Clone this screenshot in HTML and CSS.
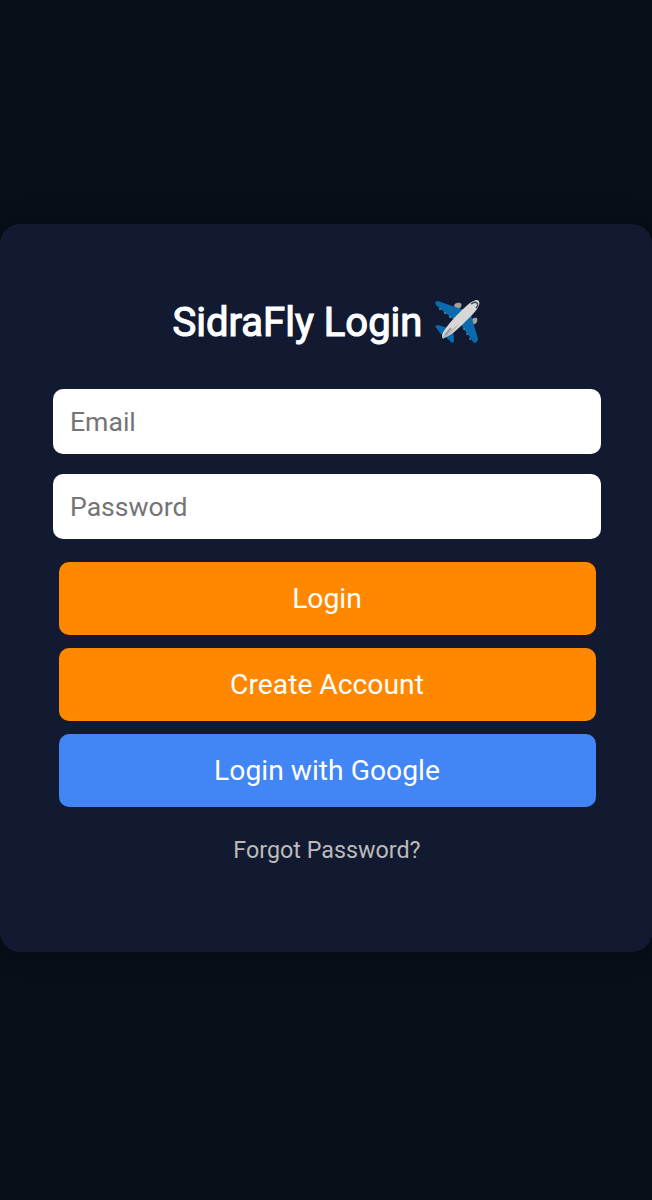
FILE: index.html
```html
<!DOCTYPE html>
<html lang="en">
<head>
    <meta charset="UTF-8">
    <meta name="viewport" content="width=device-width, initial-scale=1.0">
    <title>SidraFly Login</title>
    <link rel="stylesheet" href="styles.css">
</head>
<body>

    <div class="login-box">
        <h2>
            <span>SidraFly Login</span>
            <svg class="plane" viewBox="0 0 48 48" role="img" aria-label="Airplane">
                <!-- engines -->
                <path d="M21 8c0-3 4-4 6-3 2 0 2 3 0 5l-3 2z" fill="#a3a19f"/>
                <path d="M38 23c1-3 4-4 6-3 1 2 0 5-2 6l-3 1z" fill="#a3a19f"/>
                <!-- wings and tail -->
                <path d="M2 4l3-1 26 9-10 10L10 13 3 7z" fill="#0a6aae"/>
                <path d="M28 27l10-10 7 24c0 2-2 4-4 4z" fill="#0a6aae"/>
                <path d="M2 28l3-1 10 3-5 8-3-3z" fill="#0a6aae"/>
                <path d="M12 38l8-6 1 10c0 2-1 3-2 3z" fill="#0a6aae"/>
                <!-- flap fairings -->
                <path d="M7 10v2M12 14v2M17 18v2M32 31h-2M35 36h-2M38 41h-2" stroke="#7c9fb5" stroke-width="1.2"/>
                <!-- fuselage -->
                <path d="M9 38c0-4 8-14 15-21C31 10 38 3 43 2c3 0 4 2 3 5-2 6-9 12-15 18-7 7-14 13-20 15-1 1-2 0-2-2z" fill="#d8d7d5"/>
                <path d="M9 39c5-3 9-7 17-13-4 5-10 11-15 14-1 1-2 0-2-1z" fill="#b5b3b1"/>
                <path d="M12 37l6-7" stroke="#989694" stroke-width="1.8"/>
                <path d="M38 6c3-2 5-2 6-1s1 3-1 5" fill="none" stroke="#3a4a62" stroke-width="1.5"/>
            </svg>
        </h2>

        <form onsubmit="return false">
            <input type="email" placeholder="Email" aria-label="Email">
            <input type="password" placeholder="Password" aria-label="Password">
            <button type="submit">Login</button>
            <button type="button">Create Account</button>
            <button type="button" class="google">Login with Google</button>
        </form>

        <p class="forgot">Forgot Password?</p>
    </div>

</body>
</html>
```
FILE: styles.css
```css
* {
    box-sizing: border-box;
}
body {
    margin: 0;
    padding-top: 224px;
    min-height: 1200px;
    font-family: Roboto, sans-serif;
    background: #080f19;
    color: white;
}
.login-box {
    height: 728px;
    padding: 74px 51px 0 53px;
    background: #111a30;
    border-radius: 20px;
    box-shadow: 0 0 25px rgba(0, 0, 0, 0.4);
    text-align: center;
}
h2 {
    display: flex;
    justify-content: center;
    align-items: center;
    gap: 11px;
    height: 48px;
    margin: 0 0 43px;
    font-size: 40px;
    font-weight: 400;
    line-height: 48px;
    -webkit-text-stroke: 1.2px white;
}
h2 span {
    padding-top: 2px;
}
.plane {
    width: 48px;
    height: 48px;
}
input {
    display: block;
    width: 100%;
    height: 65px;
    margin-bottom: 20px;
    padding: 0 17px;
    border: none;
    border-radius: 10px;
    background: white;
    font-family: inherit;
    font-size: 26.6px;
}
input::placeholder {
    color: #757575;
}
button {
    display: block;
    width: 537px;
    height: 73px;
    margin: 0 auto 13px;
    border: none;
    border-radius: 10px;
    background: #ff8800;
    color: white;
    font-family: inherit;
    font-size: 28.25px;
    cursor: pointer;
}
input + button {
    margin-top: 23px;
}
.google {
    background: #4285f4;
}
.forgot {
    margin: 29px 0 0;
    color: #bbb;
    font-size: 23.3px;
    line-height: 28px;
}
```
